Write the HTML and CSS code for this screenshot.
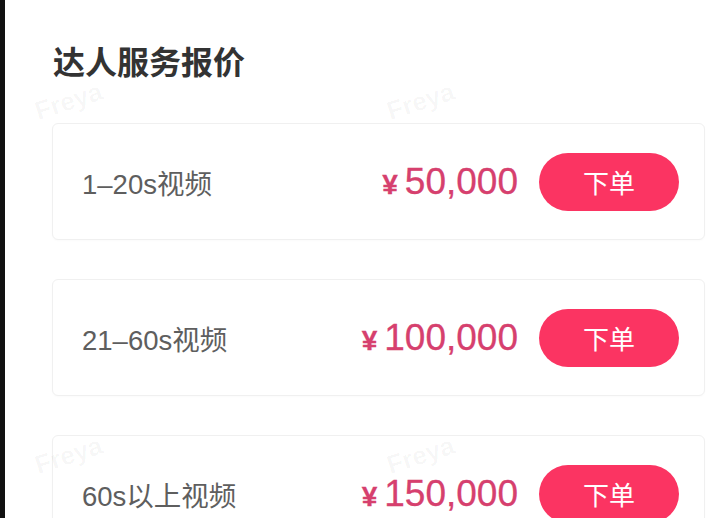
FILE: index.html
```html
<!DOCTYPE html>
<html lang="zh">
<head>
<meta charset="utf-8">
<link rel="stylesheet" href="styles.css">
</head>
<body>
<div class="screen">
  <div class="bar"></div>
  <main class="content">
    <h1 class="title">达人服务报价</h1>
    <div class="list">
      <div class="card">
        <span class="label">1–20s视频</span>
        <div class="right">
          <span class="price"><span class="yen">¥</span>50,000</span>
          <button class="btn">下单</button>
        </div>
      </div>
      <div class="card">
        <span class="label">21–60s视频</span>
        <div class="right">
          <span class="price"><span class="yen">¥</span>100,000</span>
          <button class="btn">下单</button>
        </div>
      </div>
      <div class="card">
        <span class="label">60s以上视频</span>
        <div class="right">
          <span class="price"><span class="yen">¥</span>150,000</span>
          <button class="btn">下单</button>
        </div>
      </div>
    </div>
  </main>
  <span class="wm wm1">Freya</span>
  <span class="wm wm2">Freya</span>
  <span class="wm wm3">Freya</span>
  <span class="wm wm4">Freya</span>
</div>
</body>
</html>
```
FILE: styles.css
```css
html, body {
  margin: 0;
  padding: 0;
  background: #fff;
}
body {
  font-family: "Liberation Sans", "Noto Sans CJK SC", sans-serif;
}
.screen {
  position: relative;
  display: flex;
  width: 708px;
  height: 518px;
  overflow: hidden;
  background: #fff;
}
.bar {
  width: 5px;
  flex: none;
  background: #111;
}
.content {
  flex: 1;
  padding: 35px 3px 0 47px;
}
.title {
  margin: 0 0 0 1px;
  font-family: "Noto Sans CJK SC", sans-serif;
  font-size: 32px;
  font-weight: 700;
  line-height: 50px;
  color: #333;
}
.list {
  margin-top: 38px;
  display: flex;
  flex-direction: column;
  gap: 39px;
}
.card {
  height: 115px;
  border: 1px solid #f0f0f0;
  border-radius: 6px;
  background: #fff;
  display: flex;
  align-items: center;
  justify-content: space-between;
  padding: 0 25px 0 29px;
  box-shadow: 0 1px 2px rgba(0,0,0,0.02);
}
.label {
  font-family: "Liberation Sans", "Noto Sans CJK SC", sans-serif;
  font-size: 27.5px;
  color: #5e5e5e;
}
.right {
  display: flex;
  align-items: center;
  gap: 21px;
}
.price {
  font-family: "Liberation Sans", sans-serif;
  font-size: 37px;
  color: #d6406e;
  line-height: 1;
  display: flex;
  align-items: baseline;
  -webkit-text-stroke: 0.3px #d6406e;
}
.yen {
  font-size: 28px;
  font-weight: 700;
  margin-right: 7px;
}
.btn {
  width: 140px;
  height: 58px;
  border: none;
  border-radius: 29px;
  background: #fb3462;
  color: #fff;
  font-family: "Noto Sans CJK SC", sans-serif;
  font-size: 26px;
  padding: 0;
}
.wm {
  position: absolute;
  font-family: "Liberation Sans", sans-serif;
  font-size: 26px;
  font-weight: 700;
  color: rgba(0,0,0,0.035);
  transform: rotate(-18deg);
}
.wm1 { left: 34px; top: 86px; }
.wm2 { left: 386px; top: 86px; }
.wm3 { left: 34px; top: 440px; }
.wm4 { left: 386px; top: 440px; }
```
